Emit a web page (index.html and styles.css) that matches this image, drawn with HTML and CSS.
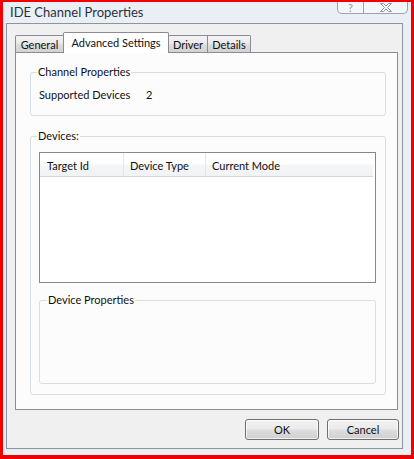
FILE: index.html
```html
<!DOCTYPE html>
<html lang="en">
<head>
<meta charset="utf-8">
<title>IDE Channel Properties</title>
<link rel="stylesheet" href="styles.css">
</head>
<body>
<div class="window">
  <div class="titlebar">
    <span class="title">IDE Channel Properties</span>
    <div class="caption-buttons">
      <span class="cap-btn help">?</span>
      <span class="cap-btn close">
        <svg width="14" height="9" viewBox="0 0 14 9"><path d="M1.5 0.5 L4.5 0.5 L7 3 L9.5 0.5 L12.5 0.5 L8.5 4.5 L12.5 8.5 L9.5 8.5 L7 6 L4.5 8.5 L1.5 8.5 L5.5 4.5 Z" fill="none" stroke="#8c96a3" stroke-width="1"/></svg>
      </span>
    </div>
  </div>
  <div class="client">
    <div class="tabs">
      <div class="tab t-general">General</div>
      <div class="tab t-adv selected">Advanced Settings</div>
      <div class="tab t-driver">Driver</div>
      <div class="tab t-details">Details</div>
    </div>
    <div class="panel">
      <fieldset class="group g-channel">
        <legend>Channel Properties</legend>
        <div class="row"><span class="label">Supported Devices</span><span class="value">2</span></div>
      </fieldset>
      <fieldset class="group g-devices">
        <legend>Devices:</legend>
        <div class="listview">
          <div class="lv-header">
            <div class="col c1">Target Id</div>
            <div class="col c2">Device Type</div>
            <div class="col c3">Current Mode</div>
          </div>
        </div>
        <fieldset class="group g-props">
          <legend>Device Properties</legend>
          <div class="props-body"></div>
        </fieldset>
      </fieldset>
    </div>
    <div class="buttons">
      <button class="btn ok">OK</button>
      <button class="btn cancel">Cancel</button>
    </div>
  </div>
</div>
</body>
</html>
```
FILE: styles.css
```css
* { box-sizing: border-box; }
html, body { margin: 0; padding: 0; }
body {
  width: 414px;
  height: 459px;
  overflow: hidden;
  font-family: "Lato", "Liberation Sans", sans-serif;
  font-size: 11px;
  color: #111;
}
.window {
  width: 414px;
  height: 459px;
  border-style: solid;
  border-color: #f20000;
  border-width: 2px 3px 4px 3px;
  background: #eaeff5;
  padding: 0 8px 6px 3px;
  display: flex;
  flex-direction: column;
}
.titlebar {
  height: 21px;
  display: flex;
  align-items: center;
  padding-left: 4px;
}
.title {
  font-size: 13px;
  color: #2a323c;
  flex: 1;
  padding-bottom: 1px;
}
.caption-buttons {
  align-self: flex-start;
  display: flex;
  margin-right: -5px;
  height: 12px;
  border: 1px solid #9aa4b1;
  border-top: none;
  border-radius: 0 0 5px 5px;
  background: #f4f6f9;
}
.cap-btn {
  display: flex;
  align-items: center;
  justify-content: center;
  color: #8c96a3;
  font-size: 11px;
  line-height: 11px;
}
.help { width: 26px; border-right: 1px solid #9aa4b1; }
.close { width: 43px; }
.client {
  flex: 1;
  border: 1px solid #8c949e;
  background: #f0f0f0;
  padding: 8px 3px 8px 8px;
  display: flex;
  flex-direction: column;
}
.tabs {
  display: flex;
  align-items: flex-end;
  height: 21px;
  margin-bottom: -1px;
  position: relative;
  z-index: 1;
}
.tab {
  height: 17px;
  margin-bottom: 1px;
  margin-left: -1px;
  border: 1px solid #898c95;
  border-bottom: none;
  background: linear-gradient(#f3f3f3 0%, #ebebeb 45%, #dddddd 55%, #d2d2d2 100%);
  display: flex;
  align-items: center;
  justify-content: center;
  padding-top: 1px;
  white-space: nowrap;
}
.tab.t-general { margin-left: 0; width: 49px; border-radius: 2px 0 0 0; }
.tab.t-adv { width: 106px; }
.tab.t-driver { width: 40px; }
.tab.t-details { width: 44px; border-radius: 0 2px 0 0; }
.tab.selected {
  height: 21px;
  margin-bottom: 0;
  background: #fff;
  border-radius: 2px 2px 0 0;
  padding-bottom: 3px;
  position: relative;
  z-index: 2;
}
.panel {
  width: 383px;
  height: 358px;
  border: 1px solid #898c95;
  background: #fcfcfc;
  padding: 12px 11px 0 14px;
}
.group {
  margin: 0;
  border: 1px solid #d5dfe5;
  border-radius: 3px;
  min-width: 0;
}
.group legend {
  padding: 0 1px;
  margin-left: -2px;
  line-height: 14px;
  height: 14px;
}
.g-channel {
  padding: 9px 8px 13px 8px;
}
.row { display: flex; line-height: 14px; height: 14px; }
.label { width: 107px; }
.g-devices {
  margin-top: 13px;
  padding: 9px 9px 10px 8px;
}
.listview {
  height: 131px;
  border: 1px solid #828790;
  background: #fff;
}
.lv-header {
  display: flex;
  height: 24px;
  background: linear-gradient(#ffffff 0%, #ffffff 45%, #f4f5f7 55%, #f1f2f4 100%);
  border-bottom: 1px solid #d5d5d5;
  margin-right: 2px;
}
.col {
  display: flex;
  align-items: center;
  border-right: 1px solid #e3e5e8;
  padding-top: 2px;
}
.c1 { width: 84px; padding-left: 7px; }
.c2 { width: 82px; padding-left: 6px; }
.c3 { flex: 1; padding-left: 6px; border-right: none; }
.g-props {
  margin-top: 10px;
  padding: 0 8px 0 9px;
}
.props-body { height: 76px; }
.buttons {
  margin-top: 9px;
  display: flex;
  justify-content: flex-end;
  gap: 8px;
}
.btn {
  height: 21px;
  border: 1px solid #707070;
  border-radius: 3px;
  background: linear-gradient(#f2f2f2 0%, #ebebeb 45%, #dddddd 55%, #cfcfcf 100%);
  font-family: "Lato", "Liberation Sans", sans-serif;
  font-size: 11px;
  color: #111;
  padding: 0 0 1px 0;
  box-shadow: inset 0 0 0 1px rgba(255,255,255,0.7);
}
.btn.ok { width: 74px; }
.btn.cancel { width: 72px; }
```
